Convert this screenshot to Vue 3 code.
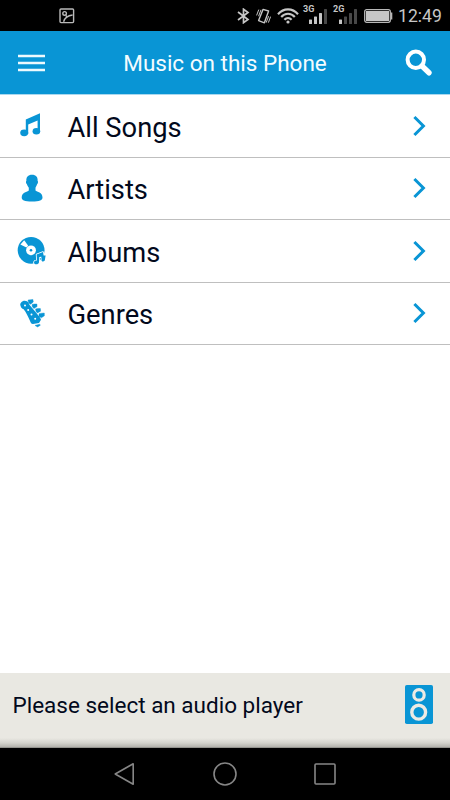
<script setup>
const rows = [
  { id: 'songs', label: 'All Songs' },
  { id: 'artists', label: 'Artists' },
  { id: 'albums', label: 'Albums' },
  { id: 'genres', label: 'Genres' },
]
const networks = [
  { name: '3G', level: 3 },
  { name: '2G', level: 1 },
]
const bars = [
  { x: 6, y: 14.5, h: 4.5 },
  { x: 11, y: 11.5, h: 7.5 },
  { x: 16, y: 8, h: 11 },
  { x: 21, y: 4, h: 15 },
]
</script>

<template>
  <div class="phone">
    <div class="status">
      <svg class="shot" width="16" height="16" viewBox="0 0 16 16" fill="none" stroke="#b9b9b9" stroke-width="1.4">
        <rect x="1" y="1" width="13.6" height="13.6" rx="1" />
        <circle cx="5.6" cy="5.4" r="1.8" />
        <path d="M4.6 13.8 C5.6 10.2 8.4 7.6 13.6 7 M6.8 7.6 L8.6 9.4" />
      </svg>
      <svg class="bt" width="13" height="16" viewBox="0 0 13 16" fill="none" stroke="#c6c6c6" stroke-width="1.7">
        <path d="M1 4 L11 11.5 L6.5 14.7 V1.2 L11 4.5 L1 12" />
      </svg>
      <svg class="vib" width="15" height="16" viewBox="0 0 15 16" fill="none" stroke="#c6c6c6">
        <path stroke-width="1.4" stroke-linejoin="round" d="M7 1.4 L12.6 3 L8.4 14.8 L2.6 12.6 Z" />
        <path stroke-width="1" d="M2.8 1.6 L.6 7.4 M5 1.8 L2.6 8.2 M12.6 8.2 L10.2 14.6 M14.6 8.6 L12.4 14.6" />
      </svg>
      <svg class="wifi" width="22" height="16" viewBox="0 0 22 16" fill="none" stroke="#c6c6c6" stroke-width="2.1">
        <path d="M1 6.2 C6.5 -.3 15.5 -.3 21 6.2 M4.2 9 C8 4.6 14 4.6 17.8 9 M7.4 11.8 C9.5 9.3 12.5 9.3 14.6 11.8" />
        <circle cx="11" cy="14" r="1.6" fill="#c6c6c6" stroke="none" />
      </svg>
      <div v-for="n in networks" :key="n.name" class="net">
        <span>{{ n.name }}</span>
        <svg width="25" height="20" viewBox="0 0 25 20">
          <rect v-for="(b, i) in bars" :key="i" :x="b.x" :y="b.y" width="3" :height="b.h" rx=".6" :fill="i < n.level ? '#c6c6c6' : '#484848'" />
        </svg>
      </div>
      <svg class="battery" width="29" height="14" viewBox="0 0 29 14">
        <rect x=".7" y=".7" width="25.6" height="12.6" rx="2" fill="none" stroke="#b8b8b8" stroke-width="1.3" />
        <rect x="2" y="2" width="23" height="10" fill="#c6c6c6" />
        <rect x="27" y="3.5" width="1.3" height="7" fill="#b8b8b8" />
      </svg>
      <span class="clock">12:49</span>
    </div>

    <header class="header">
      <svg width="27" height="18" viewBox="0 0 27 18">
        <path d="M0 2 H27 M0 9 H27 M0 16 H27" stroke="#eefafe" stroke-width="2.3" />
      </svg>
      <h1>Music on this Phone</h1>
      <svg width="28" height="28" viewBox="0 0 28 28" fill="none" stroke="#fff">
        <circle cx="10.8" cy="10.8" r="8.2" stroke-width="4" />
        <path d="M17 17 L24 23.8" stroke-width="5.4" stroke-linecap="round" />
      </svg>
    </header>

    <ul class="list">
      <li v-for="r in rows" :key="r.id">
        <svg class="icon" width="32" height="32" viewBox="0 0 32 32" fill="#0995d5">
          <template v-if="r.id === 'songs'">
            <path d="M9.8 9.5 L24 3.2 V21.5 H21.6 V10.4 L12.2 14.5 V24 H9.8 Z" />
            <ellipse cx="8.2" cy="22.8" rx="4" ry="3.4" />
            <ellipse cx="20.4" cy="21.3" rx="3.8" ry="3.3" />
          </template>
          <path v-else-if="r.id === 'artists'" d="M16 1.8 C20 1.8 22 4.4 21.6 7.8 C22.4 8.4 22 10.8 21.1 11.2 C20.7 12.8 19.8 13.8 19.5 14.8 V17.4 C21 19 26.4 18.8 26.5 24.4 C26.5 27.2 23.6 28.4 16 28.4 C8.4 28.4 5.7 27.2 5.7 24.4 C5.8 18.8 11.5 19 12.8 17.4 V14.8 C12.3 13.8 11.3 12.8 10.9 11.2 C10 10.8 9.6 8.4 10.4 7.8 C10 4.4 12 1.8 16 1.8 Z" />
          <template v-else-if="r.id === 'albums'">
            <circle cx="15.1" cy="15.3" r="13.4" />
            <path d="M4.4 9.4 L8.2 5.2 L12.2 10.8 L10.4 12.6 Z" fill="#fff" />
            <circle cx="15" cy="15.3" r="4.9" fill="#fff" />
            <circle cx="15" cy="15.3" r="1.3" />
            <path d="M20.6 19.6 L27 17 L27.6 20.6 L29.6 20.4 L28.8 25.5 C27 27.6 24.8 26.2 25.6 24.2 L25.2 21.6 L23 22.4 V27.3 C22.4 30.2 18 29.8 18 27.4 C18.2 25.6 20 25.2 21 25.6 Z" stroke="#fff" stroke-width="1.6" stroke-linejoin="round" paint-order="stroke" />
          </template>
          <template v-else>
            <path d="M4.6 8 C3 4.5 7.5 1.3 11 3.2 C12.6 4 12.5 5.3 14 7.5 L20 14.5 C22.5 17.5 24.5 20 25 21.8 L23 25 L17 26 C14.8 26 14.6 24 13.6 22 C11.8 18 10 14 7.6 11.2 C6 11 5 9.6 4.6 8 Z" />
            <path d="M12.7 5 L12 2 L14.4 1.8 L16.9 1.4 L17.3 4 L14.6 6.2 Z M16.4 9 L16 6.4 L18.5 6 L20.9 6 L21.1 8.6 L18 10.6 Z M20 13.4 L19.6 10.9 L22 10.4 L24.4 10.6 L24.6 13.2 L21.4 15 Z M23 18.4 L23 15.7 L25.7 15.2 L28.3 15 L28.4 17.8 L25.4 19.8 Z M19 27.4 L23.6 26.2 L24.4 27.2 L21.6 29 Z" stroke="#0995d5" stroke-width=".4" stroke-linejoin="round" />
            <g fill="#fff">
              <circle cx="9" cy="7.6" r="1" />
              <circle cx="12.2" cy="12" r="1" />
              <circle cx="15.5" cy="16.4" r="1" />
              <circle cx="19.2" cy="20.8" r="1" />
            </g>
          </template>
        </svg>
        <span>{{ r.label }}</span>
        <svg class="chevron" width="14" height="22" viewBox="0 0 14 22" fill="none" stroke="#0995d5" stroke-width="3">
          <path d="M2.4 2 L11.4 11 L2.4 20" />
        </svg>
      </li>
    </ul>

    <footer class="player">
      <span>Please select an audio player</span>
      <svg width="28" height="39" viewBox="0 0 28 39">
        <rect width="28" height="39" rx="1.8" fill="#0995d5" />
        <g fill="none" stroke="#eceae4">
          <circle cx="14" cy="9.9" r="5.2" stroke-width="3.2" />
          <circle cx="13.7" cy="27.2" r="6.9" stroke-width="3.4" />
        </g>
      </svg>
    </footer>

    <nav class="nav">
      <svg width="24" height="24" viewBox="0 0 24 24"><path d="M2.2 12 L20.2 1.8 V22.2 Z" /></svg>
      <svg width="24" height="24" viewBox="0 0 24 24"><circle cx="12" cy="12" r="11" /></svg>
      <svg width="24" height="24" viewBox="0 0 24 24"><rect x="2" y="2" width="20" height="20" rx="1" /></svg>
    </nav>
  </div>
</template>

<style>
body {
  margin: 0;
}
</style>

<style scoped>
.phone {
  width: 450px;
  height: 800px;
  display: flex;
  flex-direction: column;
  background: #fff;
  font-family: Roboto, "Liberation Sans", sans-serif;
  overflow: hidden;
}
svg {
  display: block;
  flex: none;
}
.status {
  height: 31px;
  display: flex;
  align-items: center;
  background: #000;
  color: #c6c6c6;
}
.shot {
  margin-left: 58.5px;
}
.bt {
  margin-left: 162px;
}
.vib {
  margin-left: 6px;
}
.wifi {
  margin-left: 6.5px;
}
.net {
  width: 25px;
  height: 20px;
  margin-left: 4px;
  margin-right: .5px;
  display: grid;
}
.net > * {
  grid-area: 1 / 1;
}
.net span {
  font-size: 9px;
  line-height: 8px;
  font-weight: 700;
  margin-top: -1px;
}
.net svg {
  margin-top: -1px;
}
.net + .net {
  margin-left: 4.5px;
}
.battery {
  margin-left: 5.5px;
}
.clock {
  margin: 1px 0 0 5px;
  font-size: 17.6px;
}
.header {
  box-sizing: border-box;
  height: 64px;
  padding: 0 17px 0 18px;
  display: flex;
  align-items: center;
  justify-content: space-between;
  background: #0995d5;
  border-bottom: 1px solid #a9d8ef;
}
h1 {
  margin: 1px 0 0;
  color: #f4fcff;
  font-size: 22.5px;
  font-weight: 400;
}
.list {
  flex: 1;
  margin: 0;
  padding: 0;
  list-style: none;
}
li {
  box-sizing: border-box;
  height: 63px;
  padding: 0 24px 0 16px;
  display: flex;
  align-items: center;
  border-bottom: 1px solid #bfbfbf;
}
li:nth-child(even) {
  height: 62px;
}
li span {
  flex: 1;
  margin: 3px 0 0 19.5px;
  color: #02091c;
  font-size: 27.3px;
}
.chevron {
  margin-top: -1px;
}
.player {
  box-sizing: border-box;
  height: 75px;
  padding: 0 17px 12px 12.5px;
  display: flex;
  align-items: center;
  justify-content: space-between;
  background: linear-gradient(#e9e8e2 0, #e9e8e2 65px, #d3d2cc 70px, #b3b2ac 74px, #747471 75px);
  color: #02091c;
  font-size: 22.5px;
}
.nav {
  height: 52px;
  display: flex;
  align-items: center;
  justify-content: center;
  gap: 76px;
  background: #000;
}
.nav svg {
  fill: none;
  stroke: #868686;
  stroke-width: 1.6;
  stroke-linejoin: round;
}
</style>
